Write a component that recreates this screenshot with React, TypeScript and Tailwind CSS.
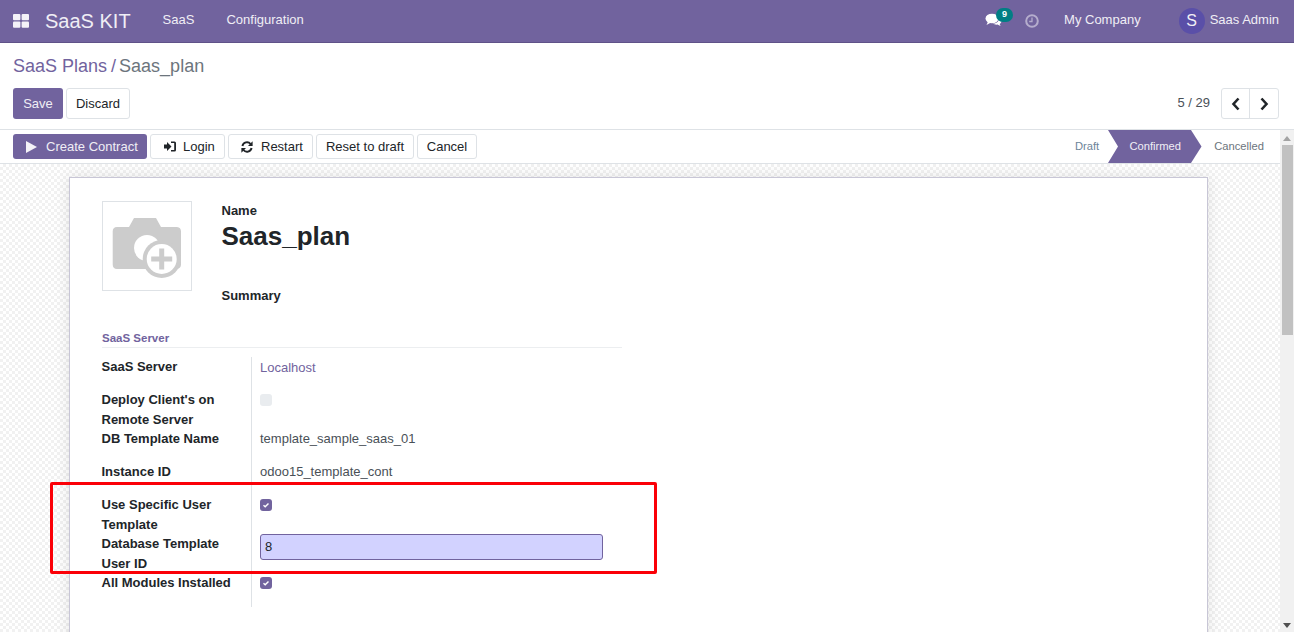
import React from "react";

const Check = () => (
  <span className="flex h-3 w-3 items-center justify-center rounded-[3px] bg-[#71639e]">
    <svg width="8" height="8" viewBox="0 0 8 8"><path d="M1.500 4.200 3.200 5.800 6.500 2.400" fill="none" stroke="#fff" strokeWidth="1.4" /></svg>
  </span>
);

const Row = ({ label, children, h, cls = "text-[#495057]" }: { label: React.ReactNode; children: React.ReactNode; h: string; cls?: string }) => (
  <div className={`flex ${h}`}>
    <div className="w-[150px] shrink-0 pl-[0.5px] font-bold leading-[19.5px] text-[#212529]">{label}</div>
    <div className={`flex-1 border-l border-[#dee2e6] pl-2 ${cls}`}>{children}</div>
  </div>
);

const Btn = ({ children, cls = "" }: { children: React.ReactNode; cls?: string }) => (
  <div className={`flex h-[25px] items-center rounded-[3px] border border-[#dee2e6] bg-white text-[#212529] ${cls}`}>{children}</div>
);

export default function App() {
  return (
    <div className="relative flex h-[632px] w-[1294px] flex-col overflow-hidden bg-white font-['Liberation_Sans',Arial,sans-serif] text-[13px] text-[#212529]">
      {/* Nav */}
      <div className="flex h-[43px] shrink-0 items-center border-b border-[#5f5288] bg-[#71639e] text-[#f0eef5]">
        <svg className="ml-[13px]" width="16" height="14" viewBox="0 0 16 14" fill="#f4f2f8">
          <rect x="0" y="0" width="7.400" height="6.200" rx="1" />
          <rect x="8.600" y="0" width="7.400" height="6.200" rx="1" />
          <rect x="0" y="7.600" width="7.400" height="6.200" rx="1" />
          <rect x="8.600" y="7.600" width="7.400" height="6.200" rx="1" />
        </svg>
        <div className="ml-4 text-[20px]">SaaS KIT</div>
        <div className="ml-[32px] pb-[3px]">SaaS</div>
        <div className="ml-[32px] pb-[3px]">Configuration</div>
        <div className="ml-auto flex items-center">
          <div className="relative h-5 w-5">
            <svg className="absolute left-[1px] top-[2px]" width="17" height="14" viewBox="0 0 17 14" fill="#fff">
              <ellipse cx="7" cy="5.500" rx="6.500" ry="4.800" />
              <path d="M3 8.500 1.500 12 6 9.500Z" />
              <path d="M14 4.500c1.500 1 2.500 2.200 2.500 3.600 0 1.300-.8 2.300-1.800 3l.8 2-3-1.500c-1.800.2-3.500-.2-4.500-1.100 3.800.2 6.600-2.600 6-6Z" />
            </svg>
            <span className="absolute left-[12px] top-[-3px] flex h-[14px] w-[17px] items-center justify-center rounded-full bg-[#017e84] text-[9px] font-bold text-white">9</span>
          </div>
          <svg className="ml-[21px]" width="14" height="14" viewBox="0 0 14 14" fill="none" stroke="#b5adcd" strokeWidth="2">
            <circle cx="7" cy="7" r="5.800" />
            <path d="M7 3.500V7.500H4.200" strokeWidth="1.3" />
          </svg>
          <div className="ml-[25px] pb-[3px]">My Company</div>
          <div className="ml-[38px] flex h-[26px] w-[26px] items-center justify-center rounded-full bg-[#5a4fa8] text-[16px]">S</div>
          <div className="ml-[5px] mr-[15px] pb-[3px]">Saas Admin</div>
        </div>
      </div>

      {/* Control panel */}
      <div className="h-[87px] shrink-0 border-b border-[#dee2e6] px-[13px]">
        <div className="flex h-[45px] items-center pt-[1px] text-[18px] leading-none">
          <span className="text-[#71639e]">SaaS Plans</span>
          <span className="ml-[4px] mr-[3px] text-[#71639e]">/</span>
          <span className="text-[#6c757d]">Saas_plan</span>
        </div>
        <div className="flex items-center">
          <div className="flex h-[31px] w-[50px] items-center justify-center rounded-[3px] bg-[#71639e] text-[#f0eef5]">Save</div>
          <div className="ml-[3px] flex h-[31px] w-[64px] items-center justify-center rounded-[3px] border border-[#dee2e6] text-[#212529]">Discard</div>
          <div className="ml-auto pb-[1px] text-[#495057]">5 / 29</div>
          <div className="ml-[11px] mr-[2px] flex h-[31px] w-[58px] rounded-[3px] border border-[#dee2e6]">
            <div className="flex flex-1 items-center justify-center border-r border-[#dee2e6]">
              <svg width="10" height="14" viewBox="0 0 10 14"><path d="M7.500 1.500 2.500 7l5 5.500" fill="none" stroke="#212529" strokeWidth="2.6" /></svg>
            </div>
            <div className="flex w-[28px] items-center justify-center">
              <svg width="10" height="14" viewBox="0 0 10 14"><path d="M2.500 1.500 7.500 7l-5 5.500" fill="none" stroke="#212529" strokeWidth="2.6" /></svg>
            </div>
          </div>
        </div>
      </div>

      <div className="flex min-h-0 flex-1">
        <div className="flex min-w-0 flex-1 flex-col">
          {/* Status bar */}
          <div className="flex h-[34px] shrink-0 items-center border-b border-[#dee2e6] pl-[13px]">
            <div className="flex h-[25px] w-[134px] items-center rounded-[3px] bg-[#71639e] pl-[13px] text-[#f0eef5]">
              <svg width="11" height="12" viewBox="0 0 11 12" fill="#f4f2f8"><path d="M0 0 11 6 0 12Z" /></svg>
              <span className="ml-[9px]">Create Contract</span>
            </div>
            <Btn cls="ml-[3px] w-[75px] pl-[13px]">
              <svg width="12" height="11" viewBox="0 0 12 11" fill="#212529"><path d="M0 3.500H3V1L7.500 5.500 3 10V7.500H0Z" /><path d="M7 .5h3.500A1.500 1.500 0 0 1 12 2v7a1.500 1.500 0 0 1-1.500 1.500H7V9h3.200V2H7Z" /></svg>
              <span className="ml-[7px]">Login</span>
            </Btn>
            <Btn cls="ml-[3px] w-[85px] pl-[12px]">
              <svg width="12" height="12" viewBox="0 0 12 12" fill="none" stroke="#212529" strokeWidth="1.9">
                <path d="M1.400 5A4.700 4.700 0 0 1 9.600 3" />
                <path d="M10.600 7A4.700 4.700 0 0 1 2.400 9" />
                <path d="M11.600 .3V5H7Z" fill="#212529" stroke="none" />
                <path d="M.4 11.700V7H5Z" fill="#212529" stroke="none" />
              </svg>
              <span className="ml-[8px]">Restart</span>
            </Btn>
            <Btn cls="ml-[3px] w-[98px] justify-center">Reset to draft</Btn>
            <Btn cls="ml-[3px] w-[60px] justify-center">Cancel</Btn>
            <div className="ml-auto mr-[16px] flex h-[33px] items-center text-[11.2px]">
              <span className="mr-[9px] text-[#6c8499]">Draft</span>
              <svg className="shrink-0" width="11" height="33" viewBox="0 0 11 33"><path d="M0 0H11V33H0L10 16.500Z" fill="#71639e" /></svg>
              <div className="flex h-[33px] w-[72px] items-center justify-center bg-[#71639e] text-[#f0eef5]">Confirmed</div>
              <svg className="shrink-0" width="11" height="33" viewBox="0 0 11 33"><path d="M0 0 10.500 16.500 0 33Z" fill="#71639e" /></svg>
              <span className="ml-[12px] text-[#6c757d]">Cancelled</span>
            </div>
          </div>

          {/* Content */}
          <div className="flex min-h-0 flex-1 justify-center bg-[#fafafa] bg-[repeating-conic-gradient(#f1f1f1_0_25%,#ffffff_0_50%)] bg-[length:6px_6px] pt-[13px]">
            <div className="ml-[-3px] h-[600px] w-[1139px] shrink-0 border border-[#c8c6d6] bg-white pl-[32px] pt-[23px] shadow-[0_0_14px_rgba(0,0,0,0.1)]">
              <div className="flex">
                <div className="flex h-[90px] w-[90px] items-center justify-center border border-[#dee2e6]">
                  <svg width="70" height="64" viewBox="0 0 70 64">
                    <path d="M5 13H17L22 4H44L49 13H65A4.500 4.500 0 0 1 69 17.500V50.500A4.500 4.500 0 0 1 65 55H5A4.500 4.500 0 0 1 .7 50.500V17.500A4.500 4.500 0 0 1 5 13Z" fill="#cccccc" />
                    <circle cx="35" cy="34" r="13" fill="#fff" />
                    <circle cx="49.700" cy="45" r="19" fill="#cccccc" />
                    <circle cx="49.700" cy="45" r="15" fill="#fff" />
                    <path d="M47.200 34.500H52.200V42.500H60.200V47.500H52.200V55.500H47.200V47.500H39.200V42.500H47.200Z" fill="#cccccc" />
                  </svg>
                </div>
                <div className="ml-[29.5px]">
                  <div className="font-bold leading-[19px]">Name</div>
                  <div className="text-[26px] font-bold leading-[32px]">Saas_plan</div>
                  <div className="mt-[34px] font-bold leading-[19px]">Summary</div>
                </div>
              </div>
              <div className="mt-[23px] h-[20px] w-[520px] border-b border-[#eceef0] text-[11.5px] font-bold leading-[21px] text-[#71639e]">SaaS Server</div>
              <div className="ml-[-1px] mt-[9px] w-[521px]">
                <Row h="h-[33px]" label="SaaS Server" cls="pt-[1px] text-[#71639e]">Localhost</Row>
                <Row h="h-[39px]" label={<>Deploy Client's on<br />Remote Server</>} cls="pt-[4px]">
                  <span className="block h-3 w-3 rounded-[3px] bg-[#e9ecef]" />
                </Row>
                <Row h="h-[33px]" label="DB Template Name">template_sample_saas_01</Row>
                <Row h="h-[33px]" label="Instance ID">odoo15_template_cont</Row>
                <Row h="h-[39px]" label={<>Use Specific User<br />Template</>} cls="pt-[4px]"><Check /></Row>
                <Row h="h-[39px]" label={<>Database Template<br />User ID</>}>
                  <div className="flex h-[26px] w-[343px] items-center rounded-[3px] border border-[#71639e] bg-[#d2d2ff] pl-[4px] text-[#212529]">8</div>
                </Row>
                <Row h="h-[34px]" label="All Modules Installed" cls="pt-[4px]"><Check /></Row>
              </div>
            </div>
          </div>
        </div>
        {/* Scrollbar */}
        <div className="flex w-[14px] shrink-0 flex-col items-center bg-[#f1f1f1]">
          <svg className="mt-[6px]" width="8" height="5" viewBox="0 0 8 5"><path d="M4 0 8 5H0Z" fill="#a3a3a3" /></svg>
          <div className="mt-[4px] h-[190px] w-[11px] shrink-0 bg-[#c1c1c1]" />
          <svg className="mb-[4px] mt-auto" width="8" height="5" viewBox="0 0 8 5"><path d="M0 0H8L4 5Z" fill="#505050" /></svg>
        </div>
      </div>

      {/* Annotation */}
      <div className="absolute left-[50px] top-[482px] h-[92px] w-[607px] rounded-[2px] border-[3px] border-[#fb0007]" />
    </div>
  );
}
